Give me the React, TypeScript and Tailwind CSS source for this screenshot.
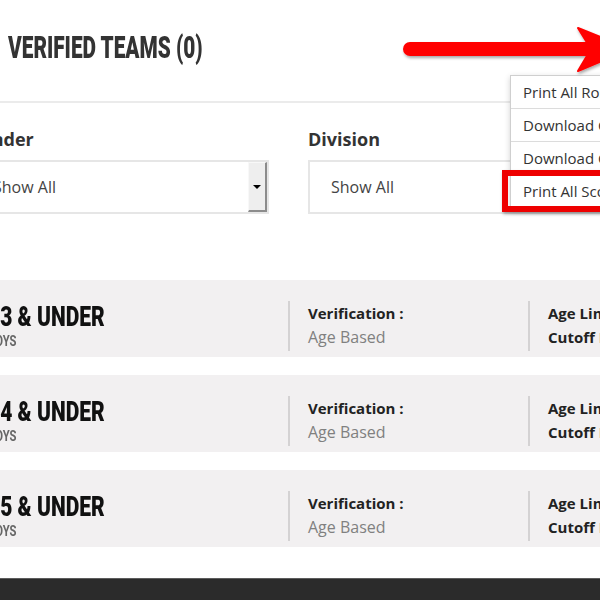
import React from "react";

const display = "font-['Roboto',sans-serif] font-black uppercase";

const divisions = [
  { name: "13 & Under", gender: "Boys" },
  { name: "14 & Under", gender: "Boys" },
  { name: "15 & Under", gender: "Boys" },
];

const menuItems = [
  "Print All Rosters",
  "Download CSV",
  "Download Check-In List",
  "Print All Scoresheets",
];

function DivisionRow({ name, gender }: { name: string; gender: string }) {
  return (
    <div className="h-[77px] bg-[#f2f0f1] flex pt-[21px] pb-[6px] -ml-[32px]">
      <div className="w-[320px] shrink-0 pl-[20px]">
        <div className={`${display} text-[28px] leading-[28px] mt-[2px] text-[#111] whitespace-nowrap origin-left scale-x-[0.75]`}>
          {name}
        </div>
        <div className={`${display} font-bold text-[15px] leading-[15px] mt-[3px] text-[#666] origin-left scale-x-[0.75]`}>
          {gender}
        </div>
      </div>
      <div className="w-[240px] shrink-0 h-[50px] border-l-2 border-[#d4d2d3] pl-[18px]">
        <div className="text-[15px] font-bold leading-[24px] text-[#222]">Verification :</div>
        <div className="text-[16px] leading-[24px] text-[#808080]">Age Based</div>
      </div>
      <div className="w-[240px] shrink-0 h-[50px] border-l-2 border-[#d4d2d3] pl-[18px]">
        <div className="text-[15px] font-bold leading-[24px] text-[#222] whitespace-nowrap">Age Limit :</div>
        <div className="text-[15px] font-bold leading-[24px] text-[#222] whitespace-nowrap">Cutoff Date</div>
      </div>
    </div>
  );
}

export default function App() {
  return (
    <div className="relative w-[600px] h-[600px] overflow-hidden bg-white flex flex-col font-['Open_Sans',sans-serif]">
      {/* header */}
      <div className="h-[103px] shrink-0 pt-[31px] pl-[8px] border-b-2 border-[#ebebeb]">
        <h1 className={`${display} text-[32px] leading-[32px] text-[#333] whitespace-nowrap origin-left scale-x-[0.65]`}>
          Verified Teams (0)
        </h1>
      </div>

      {/* filters */}
      <div className="flex gap-[39px] pt-[24px] -ml-[32px] shrink-0">
        <div className="w-[301px] shrink-0">
          <div className="text-[18px] font-bold leading-[24px] text-[#333] mb-[9px]">Gender</div>
          <div className="h-[54px] border-2 border-[#e6e6e6] flex">
            <div className="flex-1 flex items-center pl-[23px] text-[16px] text-[#444]">Show All</div>
            <div className="w-[19px] bg-[#eeeeee] border-t border-l border-[#f8f8f8] border-r-2 border-b-2 border-r-[#8c8c8c] border-b-[#8c8c8c] flex items-center justify-center">
              <div className="w-0 h-0 border-x-[4px] border-t-[4px] border-x-transparent border-t-black" />
            </div>
          </div>
        </div>
        <div className="w-[300px] shrink-0">
          <div className="text-[18px] font-bold leading-[24px] text-[#333] mb-[9px]">Division</div>
          <div className="h-[54px] border-2 border-[#e6e6e6] flex items-center pl-[21px] text-[16px] text-[#444]">
            Show All
          </div>
        </div>
      </div>

      {/* division list */}
      <div className="mt-[66px] flex flex-col gap-[18px] shrink-0">
        {divisions.map((d) => (
          <DivisionRow key={d.name} name={d.name} gender={d.gender} />
        ))}
      </div>

      <div className="flex-1" />
      <footer className="h-[22px] shrink-0 bg-[#2b2b2b] border-t border-[#5c5c5c]" />

      {/* actions menu */}
      <div className="absolute left-[510px] top-[75px] w-[200px] bg-white border border-[#cfcfcf] shadow-[0_2px_6px_rgba(0,0,0,0.18)]">
        {menuItems.map((item, i) => (
          <div
            key={item}
            className={`h-[33px] flex items-center pl-[12px] text-[15px] text-[#333] whitespace-nowrap ${i < menuItems.length - 1 ? "border-b border-[#dcdcdc]" : ""}`}
          >
            {item}
          </div>
        ))}
      </div>

      {/* annotation highlight */}
      <div className="absolute left-[502px] top-[170px] w-[140px] h-[42px] border-[6px] border-[#ee0000] shadow-[1px_2px_3px_rgba(0,0,0,0.35)]" />

      {/* annotation arrow */}
      <svg className="absolute left-[390px] top-[20px] overflow-visible" width="240" height="60" viewBox="0 0 240 60">
        <defs>
          <filter id="arrowShadow" x="-10%" y="-30%" width="130%" height="180%">
            <feDropShadow dx="1" dy="2" stdDeviation="1.5" floodColor="#000" floodOpacity="0.35" />
          </filter>
        </defs>
        <g filter="url(#arrowShadow)" fill="#ff0000" stroke="#ff0000">
          <line x1="20" y1="29" x2="200" y2="29" strokeWidth="14" strokeLinecap="round" />
          <polygon points="188,8 240,29 188,51 201,29" strokeWidth="2" strokeLinejoin="round" />
        </g>
      </svg>
    </div>
  );
}
